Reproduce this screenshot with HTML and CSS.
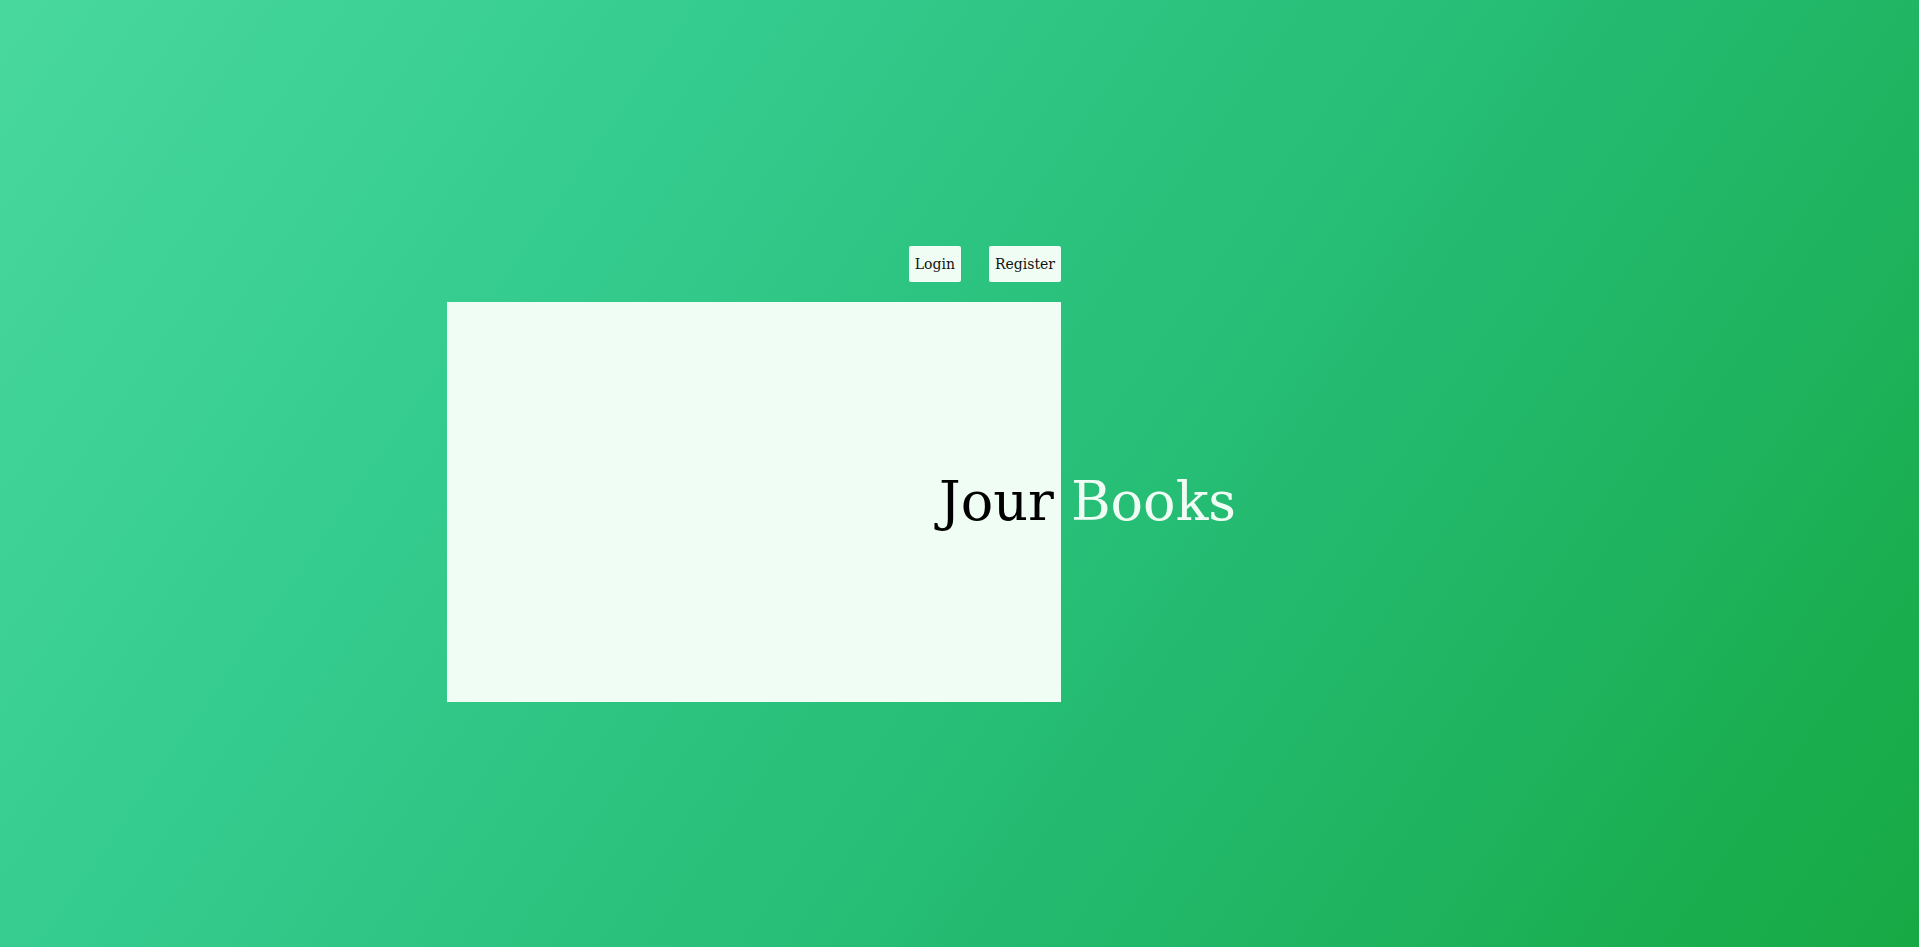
FILE: index.html
```html
<!DOCTYPE html>
<html lang="en">
<head>
<meta charset="utf-8">
<title>Jour Books</title>
<link rel="stylesheet" href="styles.css">
</head>
<body>
<div class="page">
  <div class="stage">
    <nav class="nav">
      <button class="btn">Login</button>
      <button class="btn">Register</button>
    </nav>
    <div class="row">
      <div class="card"></div>
      <h1 class="title"><span class="dark">Jour</span> <span class="light">Books</span></h1>
    </div>
  </div>
</div>
</body>
</html>
```
FILE: styles.css
```css
html, body {
  margin: 0;
  padding: 0;
}
body {
  font-family: "DejaVu Serif", "Liberation Serif", serif;
}
.page {
  min-height: 100vh;
  box-sizing: border-box;
  padding: 246px 0 0 447px;
  background: linear-gradient(125deg, #48d89e 0%, #34cb8e 29.5%, #23ba6f 64.7%, #17a943 100%);
}
.stage {
  width: 614px;
}
.nav {
  display: flex;
  justify-content: flex-end;
  gap: 28px;
  height: 36px;
  margin-bottom: 20px;
}
.btn {
  height: 36px;
  padding: 0 6px;
  border: none;
  border-radius: 2px;
  background: #f0fdf4;
  color: #111;
  font-family: "DejaVu Serif", "Liberation Serif", serif;
  font-size: 14px;
  cursor: pointer;
}
.row {
  display: flex;
  align-items: center;
}
.card {
  flex-shrink: 0;
  width: 614px;
  height: 400px;
  background: #f0fdf4;
}
.title {
  margin: 0 0 0 -122px;
  white-space: nowrap;
  font-weight: 400;
  font-size: 54px;
  line-height: 1;
}
.dark {
  color: #000;
}
.light {
  color: #f0fdf4;
}
```
